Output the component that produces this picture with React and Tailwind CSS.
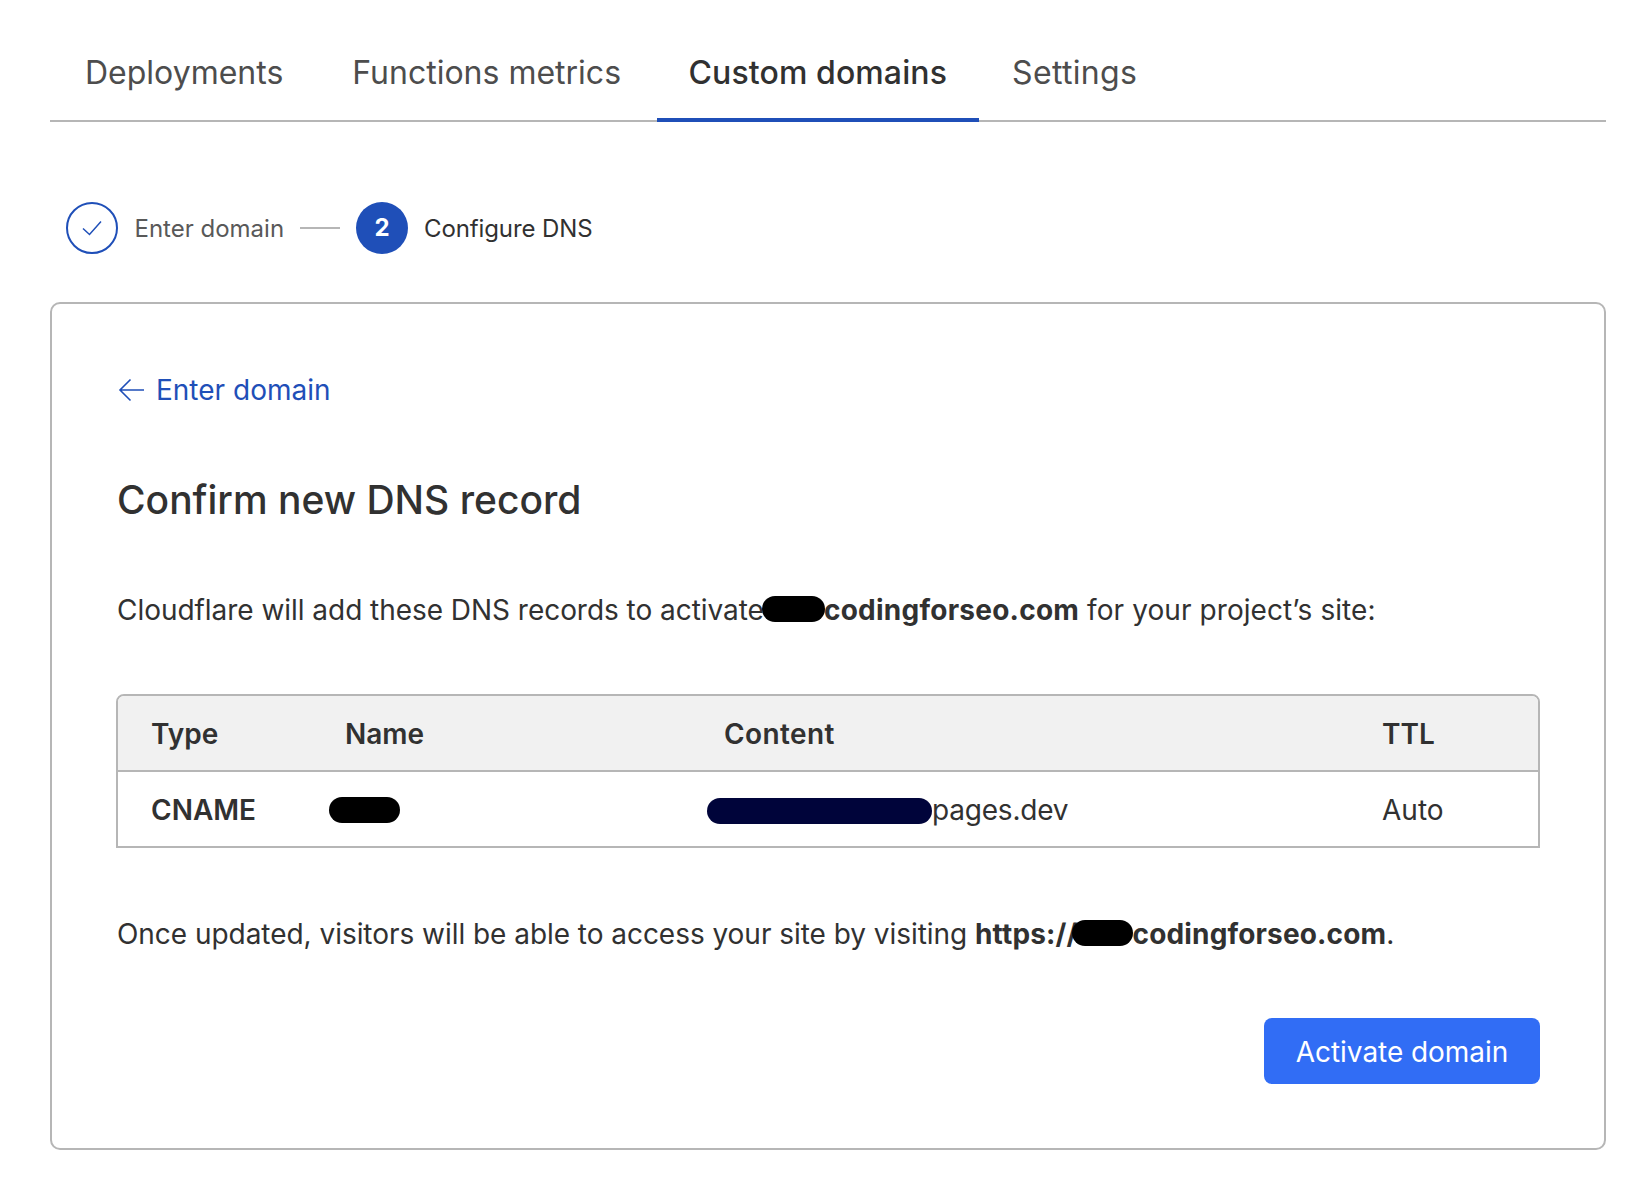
import React from "react";

const Blot = ({ className }) => <span className={`relative inline-block align-middle rounded-[13px] ${className}`} />;

function Tab({ children, className }) {
  return <div className={`h-[78px] pt-[5px] -mb-[2px] text-[32px] leading-[48px] ${className}`}>{children}</div>;
}

export default function App() {
  return (
    <div className="min-h-[1184px] bg-white pt-[44px] pl-[50px] pr-[36px] font-['Inter','Noto_Sans',sans-serif] text-[#313131]">
      <div className="flex border-b-2 border-[#b6b6b6] h-[78px]">
        <Tab className="pl-[35px] pr-[34px] text-[#4d4d4d]">Deployments</Tab>
        <Tab className="pl-[35px] pr-[36px] text-[#4d4d4d]">Functions metrics</Tab>
        <Tab className="px-[31.5px] tracking-[0.1px] text-[#313131] font-medium border-b-4 border-[#1f4fb8]">Custom domains</Tab>
        <Tab className="pl-[33.5px] pr-[35px] tracking-[0.35px] text-[#4d4d4d]">Settings</Tab>
      </div>

      <div className="flex items-center h-[52px] mt-[80px] pl-[15.5px] text-[24px]">
        <div className="w-[52px] h-[52px] rounded-full border-2 border-[#1f4fb8] flex items-center justify-center">
          <svg width="22" height="18" viewBox="0 0 22 18" fill="none" stroke="#1f4fb8" strokeWidth="1.5">
            <path d="M2 9.5 L8.5 15.5 L20 2.5" />
          </svg>
        </div>
        <span className="ml-[17px] pt-[1px] text-[#595959]">Enter domain</span>
        <div className="w-[40px] h-[2px] bg-[#b6b6b6] ml-[16px]" />
        <div className="w-[52px] h-[52px] ml-[16px] rounded-full bg-[#1f4fb8] text-white font-bold flex items-center justify-center">2</div>
        <span className="ml-[16px] pt-[1px] tracking-[-0.12px] text-[#313131]">Configure DNS</span>
      </div>

      <div className="mt-[48px] h-[848px] border-2 border-[#b6b6b6] rounded-[10px] pt-[66px] px-[64px]">
        <div className="flex items-center h-[40px] text-[#1f4fb8] text-[28px]">
          <svg className="ml-[2px]" width="27" height="24" viewBox="0 0 27 24" fill="none" stroke="#1f4fb8" strokeWidth="1.6">
            <path d="M26 12 H2 M12.5 1.5 L2 12 L12.5 22.5" />
          </svg>
          <span className="ml-[11px]">Enter domain</span>
        </div>

        <h1 className="mt-[66px] ml-[1px] text-[39px] leading-[48px] font-[550]">Confirm new DNS record</h1>

        <p className="mt-[66px] ml-[1px] text-[28px] leading-[40px] whitespace-nowrap">
          <span className="tracking-[-0.04px]">Cloudflare will add these DNS records to activate</span>
          <Blot className="w-[63px] h-[26px] bg-black -ml-[2px] -mr-[1px] -top-[3px] z-10" />
          <strong className="font-bold tracking-[0.25px]">codingforseo.com</strong>
          <span className="tracking-[0.08px]"> for your project’s site:</span>
        </p>

        <div className="mt-[64px] border-2 border-[#b6b6b6] rounded-t-[8px] text-[28px]">
          <div className="grid grid-cols-[194px_379px_658px_1fr] h-[76px] items-center pl-[33px] pt-[1px] bg-[#f1f1f1] rounded-t-[6px] font-semibold border-b-2 border-[#b6b6b6]">
            <div>Type</div>
            <div>Name</div>
            <div className="tracking-[0.4px]">Content</div>
            <div>TTL</div>
          </div>
          <div className="grid grid-cols-[194px_379px_658px_1fr] h-[74px] items-center pl-[33px] pt-[1px]">
            <div className="font-semibold">CNAME</div>
            <div>
              <Blot className="w-[71px] h-[26px] bg-black -ml-[16px] -top-[2px]" />
            </div>
            <div className="whitespace-nowrap">
              <Blot className="w-[225px] h-[26px] bg-[#00043a] -ml-[17px] -top-[1px]" />
              <span className="tracking-[-0.2px]">pages.dev</span>
            </div>
            <div>Auto</div>
          </div>
        </div>

        <p className="mt-[66px] ml-[1px] text-[28px] leading-[40px] whitespace-nowrap">
          <span className="tracking-[-0.04px]">Once updated, visitors will be able to access your site by visiting </span>
          <strong className="font-bold tracking-[0.15px]">
            https://
            <Blot className="w-[61px] h-[26px] bg-black -ml-[6px] -top-[3px]" />
            codingforseo.com
          </strong>
          .
        </p>

        <div className="flex justify-end mt-[64px]">
          <button className="w-[276px] h-[66px] pt-[1px] rounded-[8px] bg-[#316df5] text-white text-[28px] tracking-[-0.05px]">Activate domain</button>
        </div>
      </div>
    </div>
  );
}
